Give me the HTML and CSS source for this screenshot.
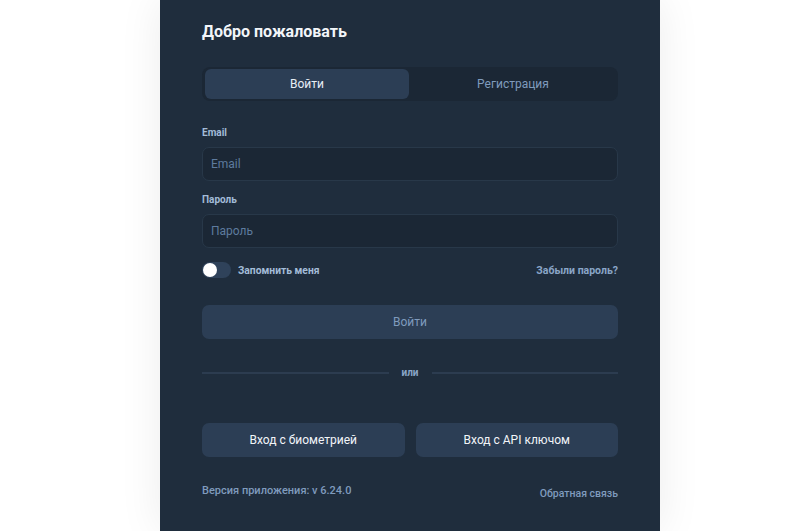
FILE: index.html
```html
<!DOCTYPE html>
<html lang="ru">
<head>
    <meta charset="UTF-8">
    <meta name="viewport" content="width=device-width, initial-scale=1.0">
    <title>Вход</title>
    <link rel="stylesheet" href="styles.css">
</head>
<body>
    <div class="page">
        <div class="card">
            <h1 class="title">Добро пожаловать</h1>
            <div class="tabs">
                <button class="tab active">Войти</button>
                <button class="tab">Регистрация</button>
            </div>
            <form class="form" onsubmit="return false">
                <label class="label" for="email">Email</label>
                <input class="input" id="email" type="email" placeholder="Email">
                <label class="label" for="password">Пароль</label>
                <input class="input" id="password" type="password" placeholder="Пароль">
                <div class="options">
                    <label class="remember">
                        <span class="switch"><span class="knob"></span></span>
                        Запомнить меня
                    </label>
                    <a class="link" href="#">Забыли пароль?</a>
                </div>
                <button class="submit" disabled>Войти</button>
            </form>
            <div class="divider"><span>или</span></div>
            <div class="alt-buttons">
                <button class="alt-btn">Вход с биометрией</button>
                <button class="alt-btn">Вход с API ключом</button>
            </div>
            <div class="footer">
                <span class="version">Версия приложения: v 6.24.0</span>
                <a class="link feedback" href="#">Обратная связь</a>
            </div>
        </div>
    </div>
</body>
</html>
```

FILE: styles.css
```css
body {
    margin: 0;
    background-color: #FFFFFF;
    font-family: Roboto, "Liberation Sans", Arial, sans-serif;
    color: white;
}
.page {
    display: flex;
    justify-content: center;
    padding-left: 20px;
}
.card {
    width: 500px;
    box-sizing: border-box;
    min-height: 531px;
    padding: 22px 42px 30px;
    background-color: #1F2D3D;
    box-shadow: 0px 0px 40px rgba(0, 0, 0, 0.08);
}
.title {
    margin: 0;
    font-size: 16px;
    font-weight: 700;
    line-height: 19px;
    color: #F2F5F9;
}
.tabs {
    display: flex;
    gap: 2px;
    margin-top: 26px;
    padding: 2px 3px;
    background-color: #1B2735;
    border-radius: 8px;
}
.tab {
    flex: 1;
    height: 30px;
    border: none;
    border-radius: 6px;
    background: transparent;
    color: #7F9BBD;
    font-family: inherit;
    font-size: 12px;
    cursor: pointer;
}
.tab.active {
    background-color: #2C3E55;
    color: #E8EEF5;
}
.form {
    display: flex;
    flex-direction: column;
    margin-top: 25px;
}
.label {
    font-size: 10px;
    font-weight: 700;
    color: #A3BCD8;
    line-height: 14px;
    margin-bottom: 7px;
}
.input {
    height: 34px;
    box-sizing: border-box;
    padding: 0 8px;
    margin-bottom: 12px;
    background-color: #1B2735;
    border: 1px solid #283849;
    border-radius: 7px;
    color: white;
    font-family: inherit;
    font-size: 12px;
    outline: none;
}
.input::placeholder {
    color: #5E7B9E;
}
.options {
    display: flex;
    justify-content: space-between;
    align-items: center;
    margin-top: 2px;
}
.remember {
    display: flex;
    align-items: center;
    gap: 7px;
    font-size: 10.3px;
    font-weight: 700;
    color: #A3BCD8;
}
.switch {
    display: flex;
    align-items: center;
    width: 29px;
    height: 16px;
    box-sizing: border-box;
    padding: 0 1px;
    border-radius: 8px;
    background-color: #2F425A;
}
.knob {
    width: 14px;
    height: 14px;
    border-radius: 50%;
    background-color: white;
}
.link {
    font-size: 10.5px;
    font-weight: 700;
    color: #8AA6C8;
    text-decoration: none;
}
.submit {
    margin-top: 27px;
    height: 34px;
    border: none;
    border-radius: 7px;
    background-color: #2C3E55;
    color: #7F9BBD;
    font-family: inherit;
    font-size: 12px;
}
.divider {
    display: flex;
    align-items: center;
    gap: 13px;
    margin-top: 28px;
    font-size: 10px;
    font-weight: 700;
    color: #8AA6C8;
}
.divider::before,
.divider::after {
    content: "";
    flex: 1;
    height: 2px;
    background-color: #2C3C50;
}
.alt-buttons {
    display: flex;
    gap: 11px;
    margin-top: 45px;
}
.alt-btn {
    flex: 1;
    height: 34px;
    border: none;
    border-radius: 7px;
    background-color: #2C3E55;
    color: #F2F5F9;
    font-family: inherit;
    font-size: 12px;
    cursor: pointer;
}
.footer {
    display: flex;
    justify-content: space-between;
    align-items: flex-start;
    margin-top: 27px;
}
.version {
    font-size: 11px;
    font-weight: 500;
    color: #7F9BBD;
}
.feedback {
    font-weight: 500;
    color: #7F9BBD;
    margin-top: 3px;
}
```
